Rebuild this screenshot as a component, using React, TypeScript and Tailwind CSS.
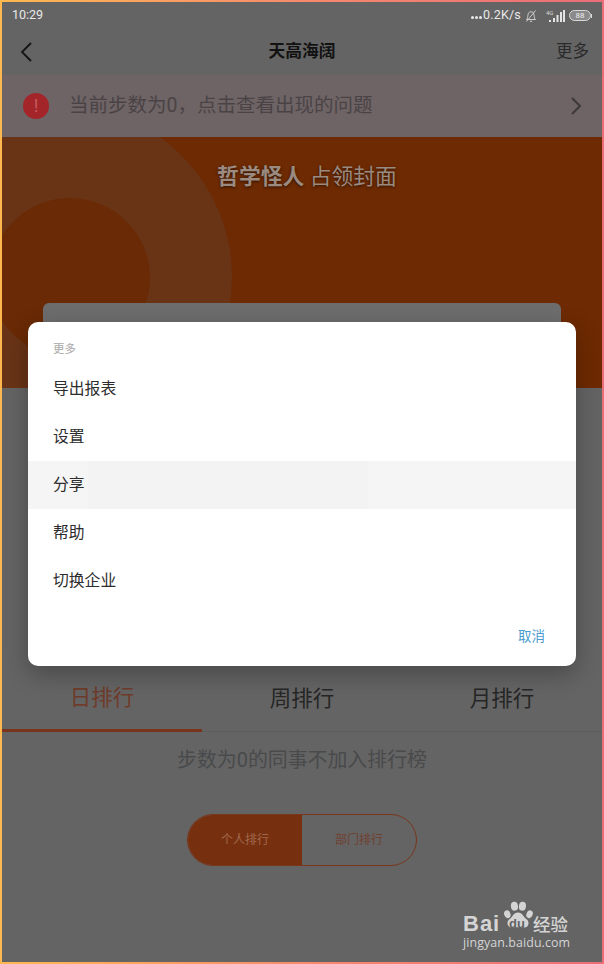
const cjk = "font-['Roboto','Noto_Sans_CJK_SC',sans-serif]";

function BellOff() {
  return (
    <svg width="14" height="14" viewBox="0 0 14 14" fill="none" stroke="#cfcfcf" strokeWidth="1">
      <path d="M2.5 10.5h9c-1-1-1.2-2-1.4-4C9.9 4 9 2.8 7 2.8S4.100 4 3.900 6.500c-.2 2-.4 3-1.400 4z" />
      <path d="M5.800 12.300h2.400" />
      <path d="M11.500 1.500 2.500 12.500" />
    </svg>
  );
}

function Signal() {
  return (
    <svg width="20" height="14" viewBox="0 0 20 14">
      <text x="0" y="5.500" fontSize="6" fill="#d8d8d8" fontFamily="Roboto, sans-serif">4G</text>
      <g fill="#e4e4e4">
        <rect x="3" y="11" width="2" height="2" />
        <rect x="7" y="9" width="2" height="4" />
        <rect x="10.500" y="6" width="2" height="7" />
        <rect x="14" y="3" width="2" height="10" />
        <rect x="17" y="1" width="2" height="12" />
      </g>
    </svg>
  );
}

function Battery() {
  return (
    <div className="flex items-center">
      <div className="flex h-[11px] w-[22px] items-center justify-center rounded-full border border-[#d8d8d8] bg-[#8a8a8a] text-[8px] leading-none text-[#f0f0f0]">
        88
      </div>
      <div className="h-[4px] w-[1px] bg-[#d8d8d8]" />
    </div>
  );
}

function StatusBar() {
  return (
    <div className="flex h-[27px] items-center justify-between pl-[10px] pr-[10px] text-[12.500px] text-[#e8e8e8]">
      <span>10:29</span>
      <div className="flex items-center gap-[3px]">
        <span className="flex items-center tracking-[0.2px]">
          <span className="mr-[1px] flex gap-[1px] pt-[4px]">
            <i className="h-[3px] w-[3px] rounded-full bg-[#e8e8e8]" />
            <i className="h-[3px] w-[3px] rounded-full bg-[#e8e8e8]" />
            <i className="h-[3px] w-[3px] rounded-full bg-[#e8e8e8]" />
          </span>
          0.2K/s
        </span>
        <BellOff />
        <span className="w-[2px]" />
        <Signal />
        <Battery />
      </div>
    </div>
  );
}

function NavBar() {
  return (
    <div className="relative flex h-[46px] items-center justify-between pl-[17px] pr-[13px]">
      <svg width="14" height="22" viewBox="0 0 14 22" fill="none" stroke="#141414" strokeWidth="1.800">
        <path d="M12 2 3 11l9 9" />
      </svg>
      <span className="absolute left-0 right-0 text-center text-[16.800px] font-bold text-[#121212]">天高海阔</span>
      <span className="text-[16.500px] text-[#2a2a2a]">更多</span>
    </div>
  );
}

function AlertBar() {
  return (
    <div className="flex h-[62px] items-center bg-[#6e6365] pl-[21px] pr-[20px]">
      <div className="flex h-[26px] w-[26px] items-center justify-center rounded-full bg-[#a32429] text-[18px] leading-none text-[#c45a5e]">!</div>
      <span className="ml-[20px] flex-1 text-[19.500px] text-[#4a4346]">当前步数为0，点击查看出现的问题</span>
      <svg width="12" height="20" viewBox="0 0 12 20" fill="none" stroke="#3d3a3b" strokeWidth="2">
        <path d="M2 2l8 8-8 8" />
      </svg>
    </div>
  );
}

function Banner() {
  return (
    <div className="relative h-[251px] overflow-hidden bg-[#6e2a02]">
      <div className="absolute left-[-114px] top-[-32px] h-[344px] w-[344px] rounded-full bg-[#693416]" />
      <div className="absolute left-[-12px] top-[61px] h-[160px] w-[160px] rounded-full bg-[#692a05]" />
      <p className="relative pl-[10px] pt-[23px] text-center text-[21.800px] leading-[34px] text-[#9a8a80] [text-shadow:0_1px_3px_rgba(0,0,0,0.6)]">
        <b>哲学怪人</b> 占领封面
      </p>
    </div>
  );
}

function Tabs() {
  return (
    <div className="flex h-[66px] border-b border-[#5d5d5d]">
      <div className="flex-1 -mb-px flex items-center justify-center border-b-[3px] border-[#79351c] pt-[1px] text-[21.500px] text-[#6f3b2a]">日排行</div>
      <div className="flex-1 flex items-center justify-center pt-[1px] text-[21.500px] text-[#262626]">周排行</div>
      <div className="flex-1 flex items-center justify-center pt-[1px] text-[21.500px] text-[#262626]">月排行</div>
    </div>
  );
}

function Dialog() {
  const items = ["导出报表", "设置", "分享", "帮助", "切换企业"];
  return (
    <div className="absolute left-[28px] top-[322px] h-[344px] w-[548px] rounded-[10px] bg-white shadow-[0_8px_24px_rgba(0,0,0,0.28)]">
      <p className="pl-[25px] pt-[19px] text-[11.500px] leading-[17px] text-[#a8a8a8]">更多</p>
      <ul className="mt-[7px]">
        {items.map((t) => (
          <li key={t} className={`flex h-[48px] items-center pl-[25px] text-[15.800px] text-[#2d2d2d] ${t === "分享" ? "bg-[linear-gradient(to_right,#f5f5f5_60px,#f3f3f3_60px,#f3f3f3_340px,#f5f5f5_340px)]" : ""}`}>
            {t}
          </li>
        ))}
      </ul>
      <div className="flex justify-end pr-[31px] pt-[21px] text-[13.500px] leading-[20px] text-[#4a9bd0]">取消</div>
    </div>
  );
}

function Watermark() {
  return (
    <div className="absolute left-[463px] top-[897px] w-[110px] text-[#d4d4d4]">
      <div className="relative h-[38px]">
        <span className="absolute left-[0px] top-[13px] font-['Liberation_Sans',sans-serif] text-[22px] font-bold leading-[28px] tracking-[1px]">Bai</span>
        <svg className="absolute left-[39px] top-[2px]" width="32" height="34" viewBox="0 0 36 38" fill="#d4d4d4">
          <ellipse cx="6" cy="17" rx="3.500" ry="4.500" transform="rotate(-20 6 17)" />
          <ellipse cx="14" cy="8" rx="4" ry="5" transform="rotate(-8 14 8)" />
          <ellipse cx="23" cy="8" rx="4" ry="5" transform="rotate(8 23 8)" />
          <ellipse cx="31" cy="17" rx="3.500" ry="4.500" transform="rotate(20 31 17)" />
          <path d="M18 15c5 0 6 5 10 8 4 4 1 10-5 9-3-.5-7-.5-10 0-6 1-9-5-5-9 4-3 5-8 10-8z" />
        </svg>
        <span className="absolute left-[46px] top-[20px] font-['Liberation_Sans',sans-serif] text-[13px] font-bold leading-[14px] text-[#626365]">du</span>
        <span className="absolute left-[70px] top-[16px] text-[17.500px] font-medium leading-[24px]">经验</span>
      </div>
      <p className="font-['Open_Sans',sans-serif] text-[12.400px] leading-[15px] tracking-[0.1px]">jingyan.baidu.com</p>
    </div>
  );
}

export default function App() {
  return (
    <div className={`${cjk} relative h-[964px] w-[604px] overflow-hidden bg-gradient-to-r from-[#ffb84f] via-[#f58a6c] to-[#ea6d78] p-[2px]`}>
      <div className="flex h-full flex-col overflow-hidden bg-[#646464]">
        <StatusBar />
        <NavBar />
        <AlertBar />
        <Banner />
        <div className="relative mx-[41px] -mt-[85px] h-[300px] shrink-0 rounded-t-[6px] bg-[#6d6d6d]" />
        <div className="h-[63px] shrink-0" />
        <Tabs />
        <p className="pt-[14px] text-center text-[19.900px] leading-[30px] text-[#494a4b]">步数为0的同事不加入排行榜</p>
        <div className="mt-[38px] flex justify-center">
          <div className="flex h-[52px] w-[230px] overflow-hidden rounded-full border border-[#78361a] text-[12px]">
            <div className="flex flex-1 items-center justify-center bg-[#77300f] text-[#a0684e]">个人排行</div>
            <div className="flex flex-1 items-center justify-center text-[#703f30]">部门排行</div>
          </div>
        </div>
      </div>
      <Dialog />
      <Watermark />
    </div>
  );
}
